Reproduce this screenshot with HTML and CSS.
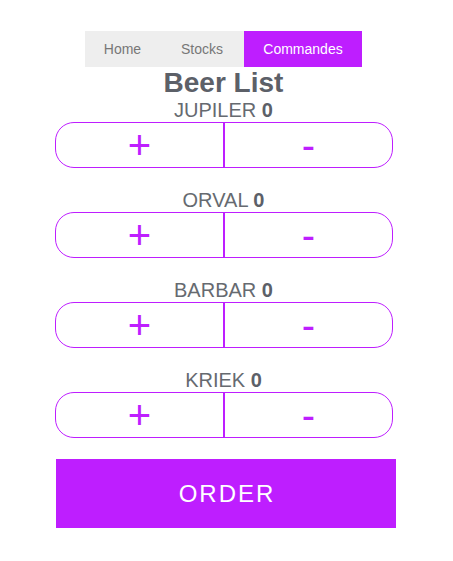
FILE: index.html
```html
<!DOCTYPE html>
<html>
<head>
<meta charset="utf-8">
<link rel="stylesheet" href="styles.css">
</head>
<body>
<div class="page">
  <nav class="nav">
    <a class="tab">Home</a>
    <a class="tab">Stocks</a>
    <a class="tab active">Commandes</a>
  </nav>
  <h1 class="title">Beer List</h1>
  <div class="beer">
    <div class="label">JUPILER <b>0</b></div>
    <div class="controls"><button class="btn plus">+</button><button class="btn minus">-</button></div>
  </div>
  <div class="beer">
    <div class="label">ORVAL <b>0</b></div>
    <div class="controls"><button class="btn plus">+</button><button class="btn minus">-</button></div>
  </div>
  <div class="beer">
    <div class="label">BARBAR <b>0</b></div>
    <div class="controls"><button class="btn plus">+</button><button class="btn minus">-</button></div>
  </div>
  <div class="beer">
    <div class="label">KRIEK <b>0</b></div>
    <div class="controls"><button class="btn plus">+</button><button class="btn minus">-</button></div>
  </div>
  <button class="order">ORDER</button>
</div>
</body>
</html>
```

FILE: styles.css
```css
html, body {
  margin: 0;
  padding: 0;
  background: #fff;
}
body {
  font-family: "Liberation Sans", Arial, sans-serif;
  color: #5c6068;
}
.page {
  width: 447px;
  display: flex;
  flex-direction: column;
  align-items: center;
  padding-top: 31px;
}
.nav {
  display: flex;
  background: #eeeeee;
  height: 36px;
  width: 277px;
}
.tab {
  display: flex;
  align-items: center;
  justify-content: center;
  font-size: 14px;
  color: #777;
  height: 36px;
}
.tab:nth-child(1) { width: 75px; }
.tab:nth-child(2) { width: 84px; }
.tab.active {
  flex: 1;
  background: #be1eff;
  color: #fff;
}
.title {
  margin: 0;
  font-size: 28px;
  line-height: 32px;
  font-weight: bold;
  color: #5c6068;
}
.beer {
  display: flex;
  flex-direction: column;
  align-items: center;
  margin-bottom: 21px;
}
.label {
  font-size: 20px;
  line-height: 23px;
  color: #666a70;
}
.label b {
  color: #5c6068;
}
.controls {
  display: flex;
  width: 338px;
  height: 46px;
  margin-left: 1px;
  border: 1px solid #be1eff;
  border-radius: 19px;
  box-sizing: border-box;
  overflow: hidden;
}
.btn {
  flex: 1;
  border: none;
  background: transparent;
  color: #be1eff;
  font-family: "Liberation Sans", Arial, sans-serif;
  font-size: 40px;
  line-height: 44px;
  padding: 0;
}
.plus {
  border-right: 2px solid #be1eff;
}
.order {
  width: 340px;
  height: 69px;
  margin-left: 5px;
  border: none;
  background: #be1eff;
  color: #fff;
  font-family: "Liberation Sans", Arial, sans-serif;
  font-size: 24px;
  letter-spacing: 2px;
  padding: 0 0 0 2px;
}
```
